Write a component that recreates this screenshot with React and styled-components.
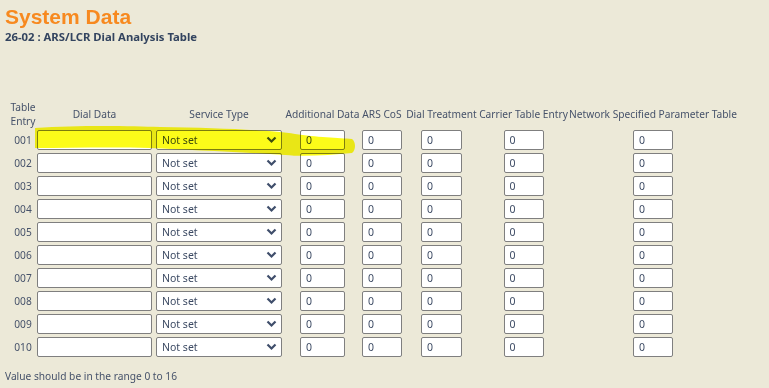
import React from 'react';
import styled, { createGlobalStyle } from 'styled-components';

const GlobalStyle = createGlobalStyle`
  html, body {
    margin: 0;
    padding: 0;
    background: #ece9d8;
  }
  body {
    font-family: 'Noto Sans', Tahoma, sans-serif;
    font-size: 10.2px;
    color: #3d4a5d;
  }
`;

const Page = styled.div`
  position: relative;
  width: 769px;
  height: 388px;
  padding: 0 5px;
  box-sizing: border-box;
  overflow: hidden;
`;

const Title = styled.h1`
  margin: 0;
  padding-top: 4px;
  height: 25px;
  font-family: 'Liberation Sans', Arial, sans-serif;
  font-weight: bold;
  font-size: 21px;
  line-height: 25px;
  color: #f7891f;
`;

const SubTitle = styled.h2`
  margin: 0;
  font-family: 'Noto Sans', Tahoma, sans-serif;
  font-weight: bold;
  font-size: 11.3px;
  line-height: 15px;
  color: #33445f;
`;

const Grid = styled.table`
  margin-top: 56px;
  border-collapse: collapse;
  table-layout: fixed;
  width: 733px;
`;

const HeadCell = styled.th`
  font-weight: normal;
  text-align: center;
  white-space: nowrap;
  line-height: 14px;
  padding: 0 0 0 ${(p) => (p.$indent ? 5 : 0)}px;
  height: 27px;
  vertical-align: middle;
  color: #46526a;
`;

const Cell = styled.td`
  height: 23px;
  padding: 0;
  text-align: center;
  vertical-align: middle;
`;

const EntryCell = styled(Cell)`
  padding-left: 5px;
  color: #46526a;
`;

const TextBox = styled.input`
  box-sizing: border-box;
  width: ${(p) => p.$w}px;
  height: 20px;
  padding: 0 0 0 5px;
  border: 1px solid #7f7f7f;
  border-radius: 2px;
  background: #fff;
  font-family: 'Noto Sans', Tahoma, sans-serif;
  font-size: 10.5px;
  color: #3c4a63;
  display: block;
  margin: 0 auto;
  outline: none;
`;

const SelectWrap = styled.div`
  position: relative;
  width: 126px;
  height: 20px;
  margin: 0 auto;
`;

const Select = styled.select`
  appearance: none;
  box-sizing: border-box;
  width: 100%;
  height: 20px;
  margin: 0;
  padding: 0 0 0 5px;
  border: 1px solid #7f7f7f;
  border-radius: 2px;
  background: #fff;
  font-family: 'Noto Sans', Tahoma, sans-serif;
  font-size: 10.5px;
  color: #3c4a63;
  outline: none;
`;

const Chevron = styled.svg`
  position: absolute;
  right: 5px;
  top: 6px;
  pointer-events: none;
`;

const Note = styled.div`
  margin-top: 11px;
  color: #46526a;
`;

const Highlight = styled.svg`
  position: absolute;
  left: 0;
  top: 0;
  pointer-events: none;
  mix-blend-mode: multiply;
`;

const rows = ['001', '002', '003', '004', '005', '006', '007', '008', '009', '010'];

const App = () => (
  <Page>
    <GlobalStyle />
    <Title>System Data</Title>
    <SubTitle>26-02 : ARS/LCR Dial Analysis Table</SubTitle>
    <Grid>
      <colgroup>
        <col style={{ width: 31 }} />
        <col style={{ width: 117 }} />
        <col style={{ width: 132 }} />
        <col style={{ width: 75 }} />
        <col style={{ width: 44 }} />
        <col style={{ width: 75 }} />
        <col style={{ width: 89 }} />
        <col style={{ width: 170 }} />
      </colgroup>
      <thead>
        <tr>
          <HeadCell $indent>
            Table
            <br />
            Entry
          </HeadCell>
          <HeadCell>Dial Data</HeadCell>
          <HeadCell>Service Type</HeadCell>
          <HeadCell>Additional Data</HeadCell>
          <HeadCell>ARS CoS</HeadCell>
          <HeadCell>Dial Treatment</HeadCell>
          <HeadCell>Carrier Table Entry</HeadCell>
          <HeadCell>Network Specified Parameter Table</HeadCell>
        </tr>
      </thead>
      <tbody>
        {rows.map((row) => (
          <tr key={row}>
            <EntryCell>{row}</EntryCell>
            <Cell>
              <TextBox $w={115} defaultValue='' />
            </Cell>
            <Cell>
              <SelectWrap>
                <Select defaultValue='0'>
                  <option value='0'>Not set</option>
                </Select>
                <Chevron width='11' height='8' viewBox='0 0 11 8'>
                  <path d='M1.5 1.5 L5.5 5.5 L9.5 1.5' fill='none' stroke='#3f4e6b' strokeWidth='2.2' />
                </Chevron>
              </SelectWrap>
            </Cell>
            <Cell>
              <TextBox $w={45} defaultValue='0' />
            </Cell>
            <Cell>
              <TextBox $w={40} defaultValue='0' />
            </Cell>
            <Cell>
              <TextBox $w={41} defaultValue='0' />
            </Cell>
            <Cell>
              <TextBox $w={40} defaultValue='0' />
            </Cell>
            <Cell>
              <TextBox $w={40} defaultValue='0' />
            </Cell>
          </tr>
        ))}
      </tbody>
    </Grid>
    <Note>Value should be in the range 0 to 16</Note>
    <Highlight width='769' height='388' viewBox='0 0 769 388'>
      <path
        d='M35 128 C 80 125, 130 126, 160 127 C 220 128, 270 130, 295 134 C 315 137, 340 138, 352 139 C 356 142, 356 150, 352 153 C 330 155, 305 157, 285 155 C 240 152, 190 150, 150 148 C 110 147, 70 148, 35 148 Z'
        fill='#fcfc00'
        opacity='0.9'
      />
    </Highlight>
  </Page>
);

export default App;
